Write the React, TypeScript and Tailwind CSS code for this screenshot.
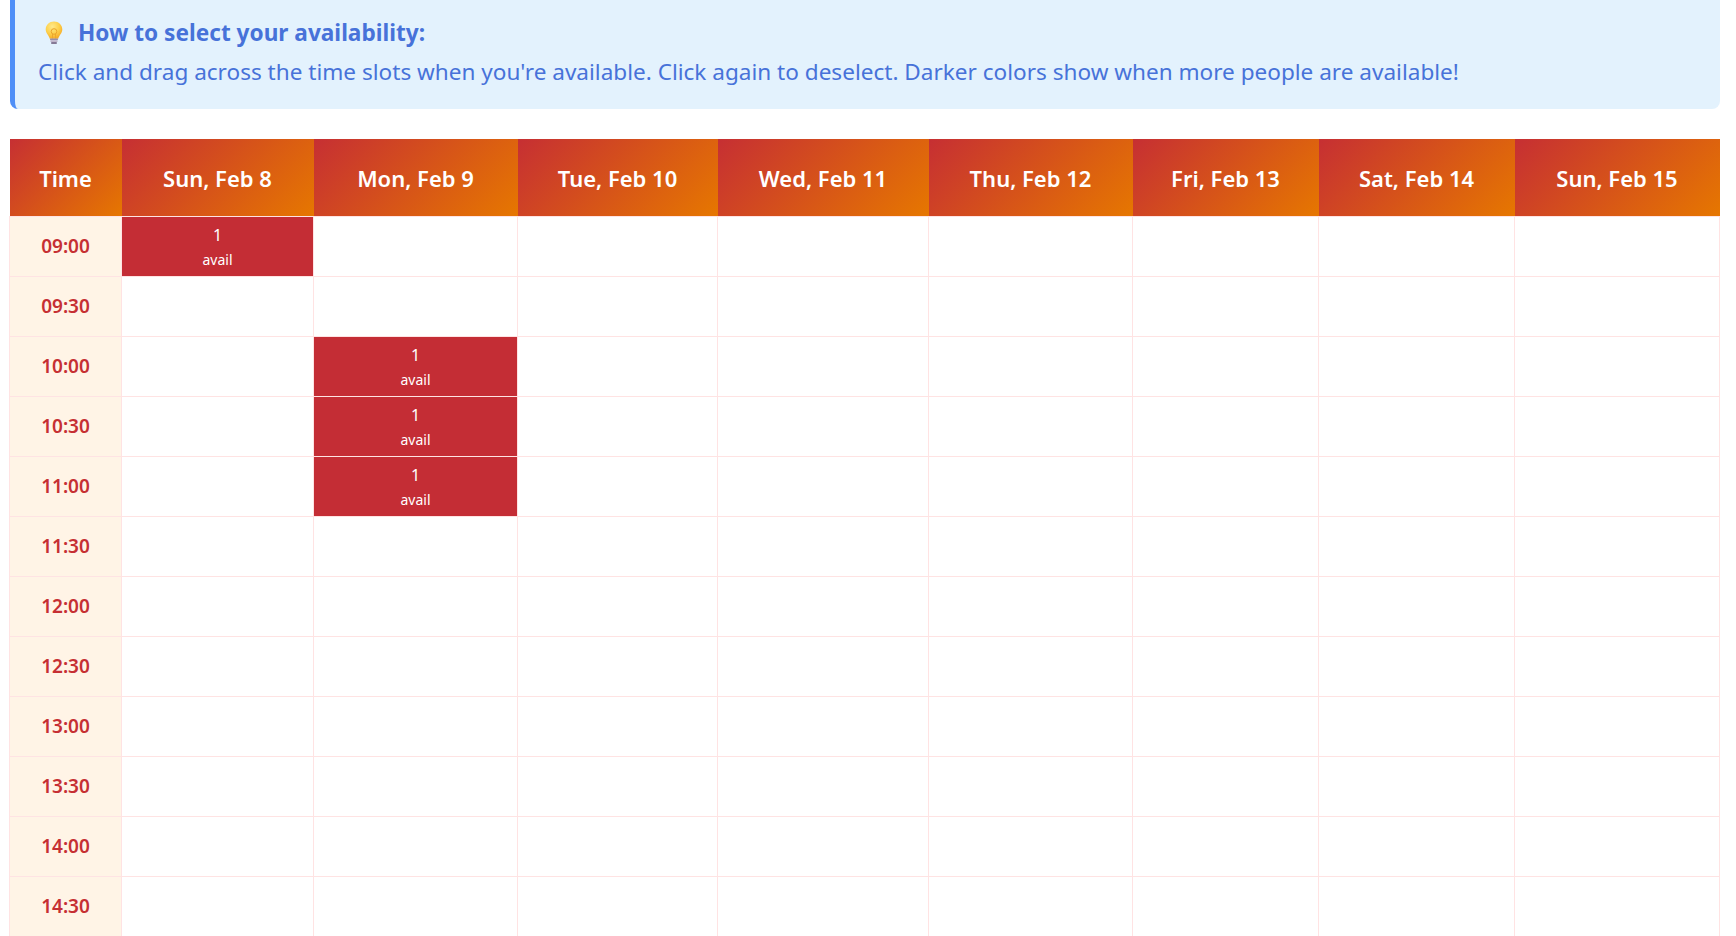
const font = "font-['Segoe_UI','Noto_Sans',sans-serif]";

const days = [
  { label: "Sun, Feb 8", width: "w-[192px]" },
  { label: "Mon, Feb 9", width: "w-[204px]" },
  { label: "Tue, Feb 10", width: "w-[200px]" },
  { label: "Wed, Feb 11", width: "w-[211px]" },
  { label: "Thu, Feb 12", width: "w-[204px]" },
  { label: "Fri, Feb 13", width: "w-[186px]" },
  { label: "Sat, Feb 14", width: "w-[196px]" },
  { label: "Sun, Feb 15", width: "w-[205px]" },
];

const times = ["09:00", "09:30", "10:00", "10:30", "11:00", "11:30", "12:00", "12:30", "13:00", "13:30", "14:00", "14:30"];

const selected: Record<string, boolean> = {
  "09:00-0": true,
  "10:00-1": true,
  "10:30-1": true,
  "11:00-1": true,
};

function Bulb() {
  return (
    <svg width="18" height="24" viewBox="0 0 18 24" className="shrink-0">
      <defs>
        <radialGradient id="bulbGlow" cx="0.4" cy="0.3" r="0.75">
          <stop offset="0" stopColor="#ffe98a" />
          <stop offset="0.55" stopColor="#fdd04a" />
          <stop offset="1" stopColor="#f5a623" />
        </radialGradient>
      </defs>
      <path d="M9 0.500C4.400 0.500 0.700 4 0.700 8.400c0 3.900 3.300 5.700 4.100 9.300h8.400c0.800-3.600 4.100-5.400 4.100-9.300C17.300 4 13.600 0.500 9 0.500z" fill="url(#bulbGlow)" />
      <circle cx="9" cy="10.500" r="2.800" fill="none" stroke="#eba52b" strokeWidth="1" />
      <path d="M7.500 13v4.500M10.500 13v4.500" stroke="#eba52b" strokeWidth="0.900" fill="none" />
      <rect x="5" y="17.500" width="8" height="1.800" rx="0.800" fill="#9a8fa8" />
      <rect x="5.300" y="19.300" width="7.400" height="1.800" rx="0.800" fill="#c0b5ca" />
      <rect x="6" y="21.100" width="6" height="1.800" rx="0.900" fill="#857a96" />
    </svg>
  );
}

export default function App() {
  return (
    <div className={`h-[936px] overflow-hidden bg-white pl-[10px] pr-[16px] ${font}`}>
      <div className="flex h-[109px] flex-col rounded-b-lg border-l-[5px] border-[#4f8ff7] bg-[#e3f2fd] pl-[23px] pt-[17px] text-[#4772d9]">
        <div className="flex h-[32px] items-center text-[22.640px] font-bold">
          <span className="ml-[6.500px] mr-[15.500px] flex"><Bulb /></span>
          How to select your availability:
        </div>
        <p className="mt-[7px] text-[22.570px] leading-[32px]">
          Click and drag across the time slots when you're available. Click again to deselect. Darker colors show when more people are available!
        </p>
      </div>
      <table className="ml-[-1px] mt-[30px] w-[1710px] table-fixed border-collapse">
        <thead>
          <tr className="h-[77px]">
            <th className="w-[112px] bg-[linear-gradient(135deg,#c62f33,#e67700)] p-0 pt-[3px] text-center text-[22px] font-semibold text-white">Time</th>
            {days.map((d) => (
              <th key={d.label} className={`${d.width} bg-[linear-gradient(135deg,#c62f33,#e67700)] p-0 pt-[3px] text-center text-[22px] font-semibold text-white`}>
                {d.label}
              </th>
            ))}
          </tr>
        </thead>
        <tbody>
          {times.map((t) => (
            <tr key={t} className="h-[60px]">
              <td className="border border-[#ffe3e3] bg-[#fff4e6] p-0 pt-[1px] text-center text-[19px] font-semibold text-[#c62f33]">{t}</td>
              {days.map((d, i) => {
                const on = selected[`${t}-${i}`];
                return (
                  <td key={d.label} className="border border-[#ffe3e3] p-0 text-center">
                    {on && (
                      <div className="flex h-[59px] flex-col items-center bg-[#c42d35] pt-[5px] text-white">
                        <span className="text-[16px] leading-[26px]">1</span>
                        <span className="mt-[1px] text-[14px] leading-[22px]">avail</span>
                      </div>
                    )}
                  </td>
                );
              })}
            </tr>
          ))}
        </tbody>
      </table>
    </div>
  );
}
